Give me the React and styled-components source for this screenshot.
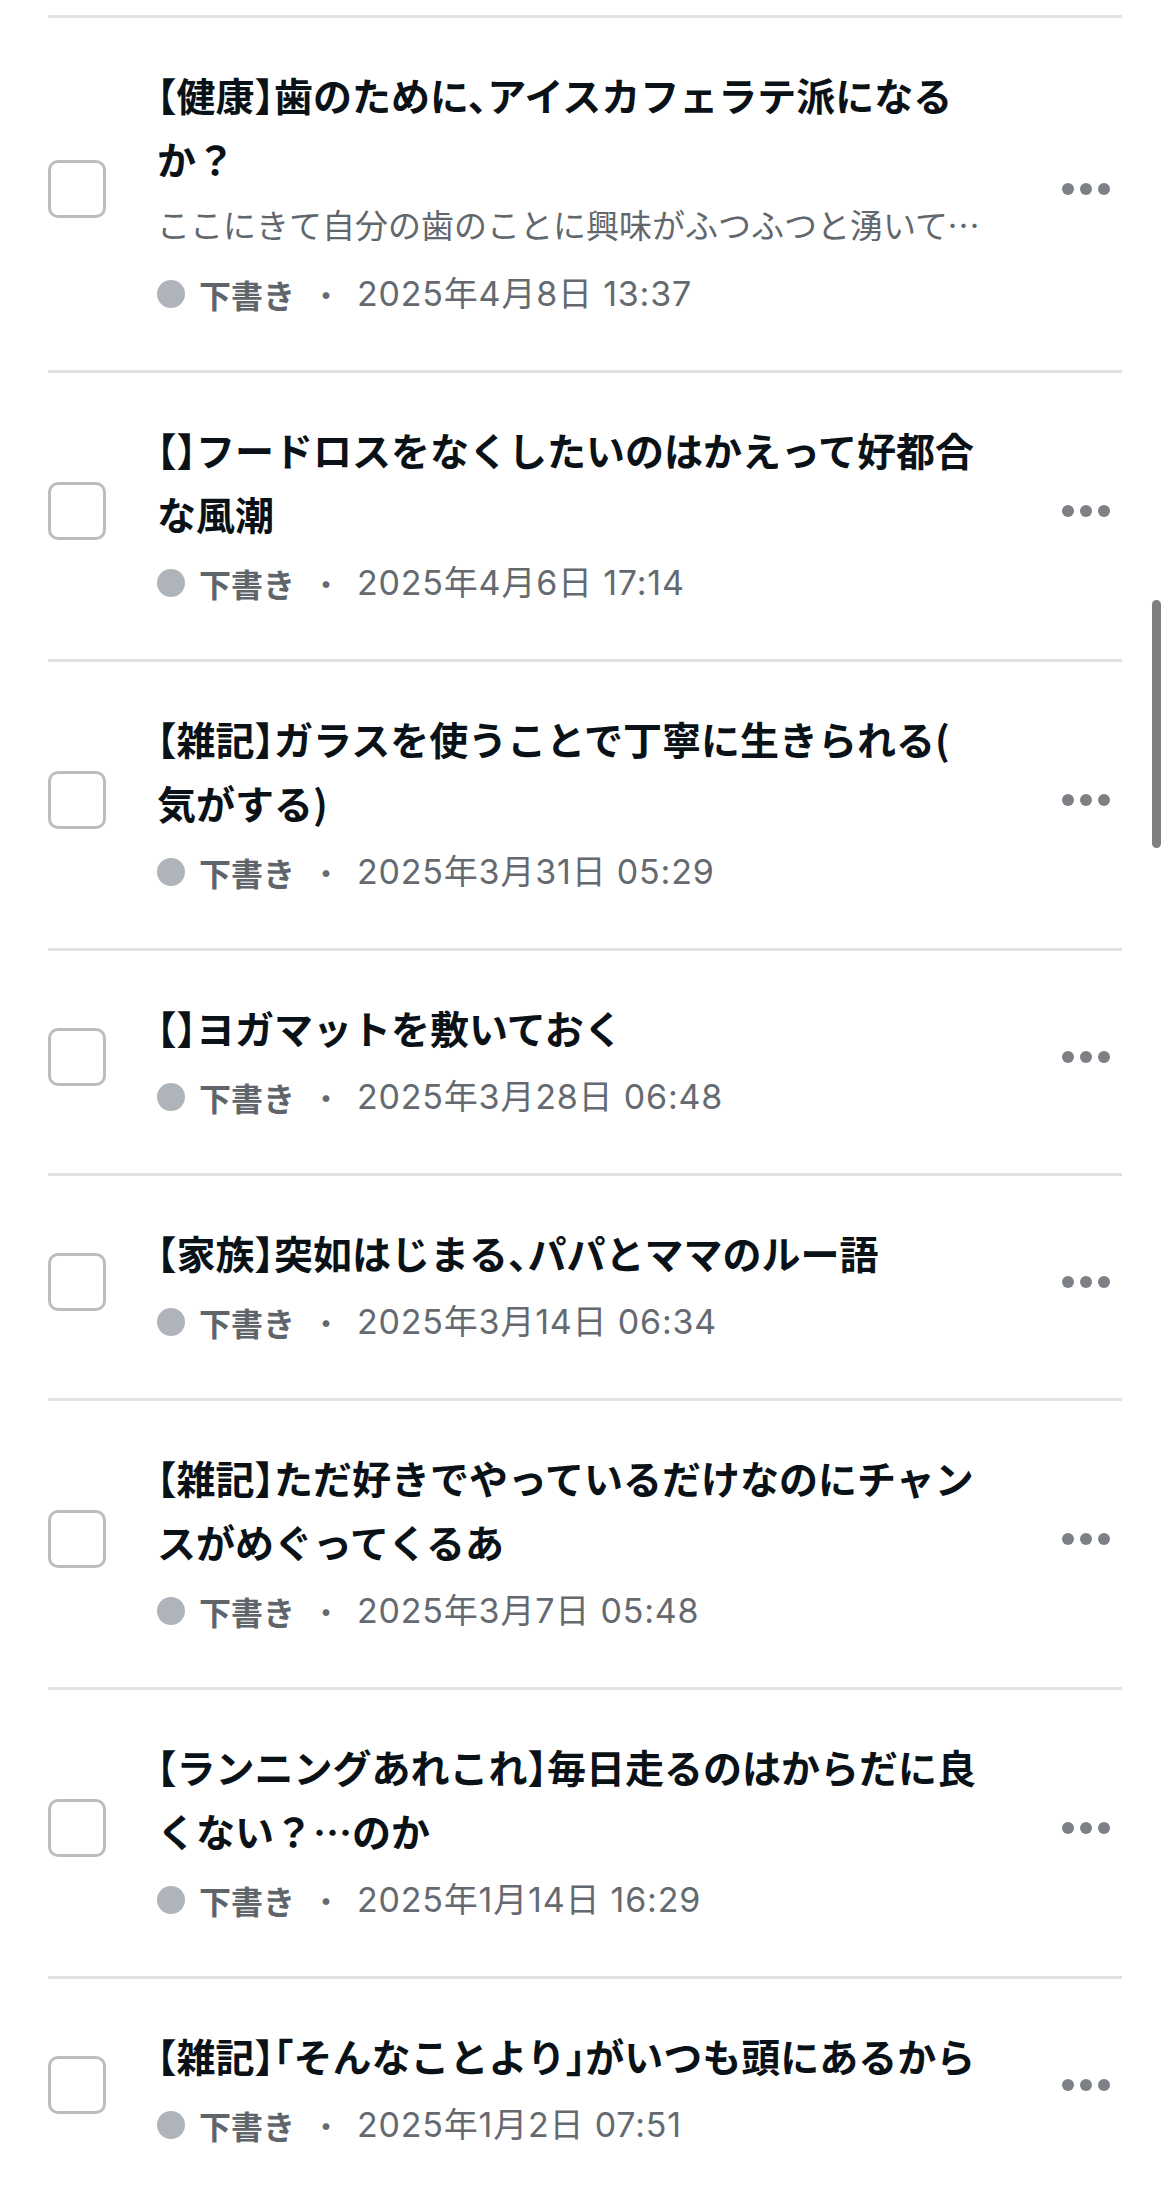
import React from 'react';
import styled, { createGlobalStyle } from 'styled-components';

const GlobalStyle = createGlobalStyle`
  html, body {
    margin: 0;
    padding: 0;
    background: #ffffff;
  }
  body {
    font-family: "Noto Sans CJK JP", "Noto Sans", sans-serif;
    -webkit-font-smoothing: antialiased;
  }
`;

const drafts = [
  {
    id: 1,
    title: '【健康】歯のために、アイスカフェラテ派になるか？',
    excerpt: 'ここにきて自分の歯のことに興味がふつふつと湧いてきた。歯医者さんに行くたびに',
    date: '2025年4月8日 13:37',
  },
  { id: 2, title: '【】フードロスをなくしたいのはかえって好都合な風潮', date: '2025年4月6日 17:14' },
  { id: 3, title: '【雑記】ガラスを使うことで丁寧に生きられる(気がする)', date: '2025年3月31日 05:29' },
  { id: 4, title: '【】ヨガマットを敷いておく', date: '2025年3月28日 06:48' },
  { id: 5, title: '【家族】突如はじまる、パパとママのルー語', date: '2025年3月14日 06:34' },
  { id: 6, title: '【雑記】ただ好きでやっているだけなのにチャンスがめぐってくるあ', date: '2025年3月7日 05:48' },
  { id: 7, title: '【ランニングあれこれ】毎日走るのはからだに良くない？…のか', date: '2025年1月14日 16:29' },
  { id: 8, title: '【雑記】「そんなことより」がいつも頭にあるから', date: '2025年1月2日 07:51' },
];

const Page = styled.div`
  position: relative;
  padding: 15px 48px 0;
  height: 2188px;
  overflow: hidden;
  box-sizing: border-box;
`;

const List = styled.ul`
  list-style: none;
  margin: 0;
  padding: 0;
`;

const Row = styled.li`
  display: flex;
  align-items: center;
  border-top: 3px solid #e2e2e2;
  padding: 44px 0 54px;
`;

const Check = styled.input.attrs({ type: 'checkbox' })`
  appearance: none;
  -webkit-appearance: none;
  flex-shrink: 0;
  width: 58px;
  height: 58px;
  margin: 0 51px 0 0;
  box-sizing: border-box;
  border: 3px solid #bdbdbd;
  border-radius: 10px;
  background: #fff;
`;

const Body = styled.div`
  flex: 0 1 845px;
  min-width: 0;
  display: flex;
  flex-direction: column;
`;

const Title = styled.h2`
  margin: 0;
  max-width: 825px;
  font-size: 39px;
  line-height: 64px;
  font-weight: 700;
  color: #0a1218;
  font-feature-settings: "halt";
  line-break: anywhere;
`;

const Excerpt = styled.p`
  margin: 12px 0 10px;
  font-size: 33px;
  line-height: 44px;
  color: #62676d;
  white-space: nowrap;
  overflow: hidden;
  text-overflow: ellipsis;
`;

const Meta = styled.div`
  display: flex;
  align-items: center;
  margin-top: 16px;
  height: 44px;
  font-size: 32px;
  line-height: 44px;
  color: #646a70;
`;

const StatusDot = styled.span`
  width: 28px;
  height: 28px;
  border-radius: 50%;
  background: #aeb4ba;
  margin-right: 14px;
`;

const Status = styled.span`
  font-weight: 700;
  color: #5f656b;
`;

const Sep = styled.span`
  margin: 0 15px;
`;

const DateText = styled.span`
  font-family: "Inter", "Noto Sans CJK JP", sans-serif;
  font-size: 34px;
  letter-spacing: 0.8px;
`;

const MoreButton = styled.button`
  margin-left: auto;
  margin-right: 12px;
  padding: 0;
  border: 0;
  background: none;
  display: flex;
  align-items: center;
`;

const Scrollbar = styled.div`
  position: absolute;
  top: 600px;
  right: 9px;
  width: 9px;
  height: 248px;
  border-radius: 5px;
  background: #7f7f7f;
`;

const MoreIcon = () => (
  <svg width="48" height="12" viewBox="0 0 48 12" aria-hidden="true">
    <circle cx="6" cy="6" r="6" fill="#7d8085" />
    <circle cx="24" cy="6" r="6" fill="#7d8085" />
    <circle cx="42" cy="6" r="6" fill="#7d8085" />
  </svg>
);

const DraftRow = ({ draft }) => (
  <Row>
    <Check aria-label="選択" />
    <Body>
      <Title>{draft.title}</Title>
      {draft.excerpt && <Excerpt>{draft.excerpt}</Excerpt>}
      <Meta>
        <StatusDot />
        <Status>下書き</Status>
        <Sep>・</Sep>
        <DateText>{draft.date}</DateText>
      </Meta>
    </Body>
    <MoreButton aria-label="メニュー">
      <MoreIcon />
    </MoreButton>
  </Row>
);

export default function App() {
  return (
    <>
      <GlobalStyle />
      <Page>
        <List>
          {drafts.map((d) => (
            <DraftRow key={d.id} draft={d} />
          ))}
        </List>
        <Scrollbar />
      </Page>
    </>
  );
}
